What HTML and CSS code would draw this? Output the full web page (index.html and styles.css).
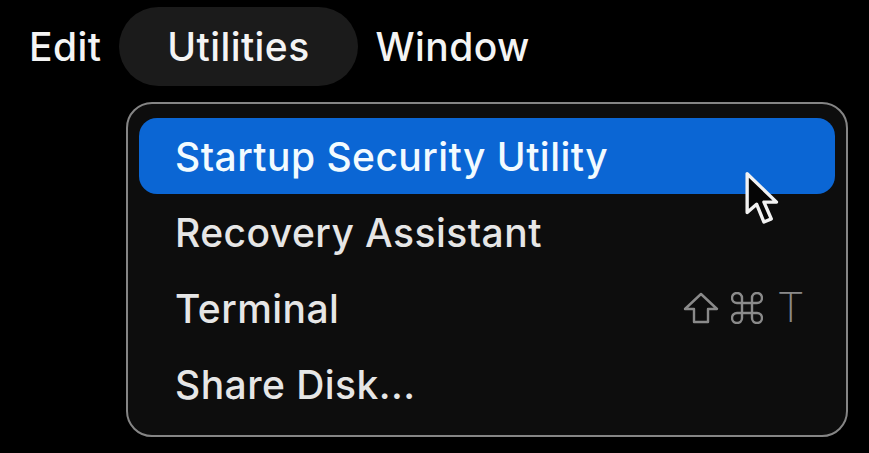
FILE: index.html
```html
<!DOCTYPE html>
<html lang="en">

<head>
    <meta charset="UTF-8">
    <meta name="viewport" content="width=device-width, initial-scale=1.0">
    <title>Recovery Menu</title>
    <link rel="stylesheet" href="styles.css">
</head>

<body>
    <nav class="menu-bar">
        <span class="menu-title">Edit</span>
        <span class="menu-title active">Utilities</span>
        <span class="menu-title">Window</span>
    </nav>

    <div class="dropdown">
        <div class="menu-item selected">
            <span class="item-label">Startup Security Utility</span>
        </div>
        <div class="menu-item">
            <span class="item-label">Recovery Assistant</span>
        </div>
        <div class="menu-item">
            <span class="item-label">Terminal</span>
            <span class="shortcut">
                <!-- shift -->
                <svg class="key-icon" width="36" height="32" viewBox="0 0 36 32">
                    <path d="M18 2 L34 17 L25 17 L25 30 L11 30 L11 17 L2 17 Z" fill="none" stroke="#8a8a8a" stroke-width="2.4" stroke-linejoin="round"/>
                </svg>
                <!-- command -->
                <svg class="key-icon" width="32" height="32" viewBox="0 0 32 32">
                    <path d="M11 11 L11 6 A5 5 0 1 0 6 11 L26 11 A5 5 0 1 0 21 6 L21 26 A5 5 0 1 0 26 21 L6 21 A5 5 0 1 0 11 26 Z" fill="none" stroke="#8a8a8a" stroke-width="2.4" stroke-linejoin="round"/>
                </svg>
                <span class="key-letter">T</span>
            </span>
        </div>
        <div class="menu-item">
            <span class="item-label">Share Disk...</span>
        </div>

        <!-- mouse pointer over the first item -->
        <svg class="pointer" width="42" height="60" viewBox="0 0 40 56">
            <path d="M3 3 L3 40 L12 32 L19 49 L26 46 L19 30 L31 30 Z" fill="#050505" stroke="#f2f2f2" stroke-width="3.2" stroke-linejoin="round"/>
        </svg>
    </div>
</body>

</html>
```

FILE: styles.css
```css
body {
    margin: 0;
    width: 869px;
    height: 453px;
    background: #000;
    font-family: Inter, "Noto Sans", sans-serif;
    color: #ececec;
    overflow: hidden;
}

.menu-bar {
    display: flex;
    align-items: center;
    gap: 18px;
    height: 79px;
    margin-top: 7px;
    padding-left: 29px;
}

.menu-title {
    font-size: 39px;
    font-weight: 500;
    letter-spacing: 0.4px;
    color: #f4f4f4;
    line-height: 79px;
}

.menu-title.active {
    background: #1b1b1b;
    border-radius: 40px;
    padding: 0 48px;
}

.dropdown {
    position: relative;
    width: 696px;
    margin: 16px 0 0 126px;
    padding: 14px 11px 13px 11px;
    border: 2px solid #858585;
    border-radius: 26px;
    background: #0d0d0d;
}

.menu-item {
    display: flex;
    align-items: center;
    justify-content: space-between;
    height: 76px;
    padding: 0 32px 0 36px;
    border-radius: 18px;
}

.menu-item.selected {
    background: #0b66d4;
}

.item-label {
    font-size: 39px;
    font-weight: 500;
    letter-spacing: 0.45px;
    color: #e6e6e6;
}

.selected .item-label {
    color: #f2fbff;
}

.shortcut {
    display: flex;
    align-items: center;
    gap: 12px;
}

.key-icon {
    display: block;
}

.key-letter {
    font-family: "DejaVu Sans", sans-serif;
    font-weight: 300;
    font-size: 40px;
    color: #8a8a8a;
    margin-left: 4px;
}

.pointer {
    position: absolute;
    left: 616px;
    top: 66px;
}
```
